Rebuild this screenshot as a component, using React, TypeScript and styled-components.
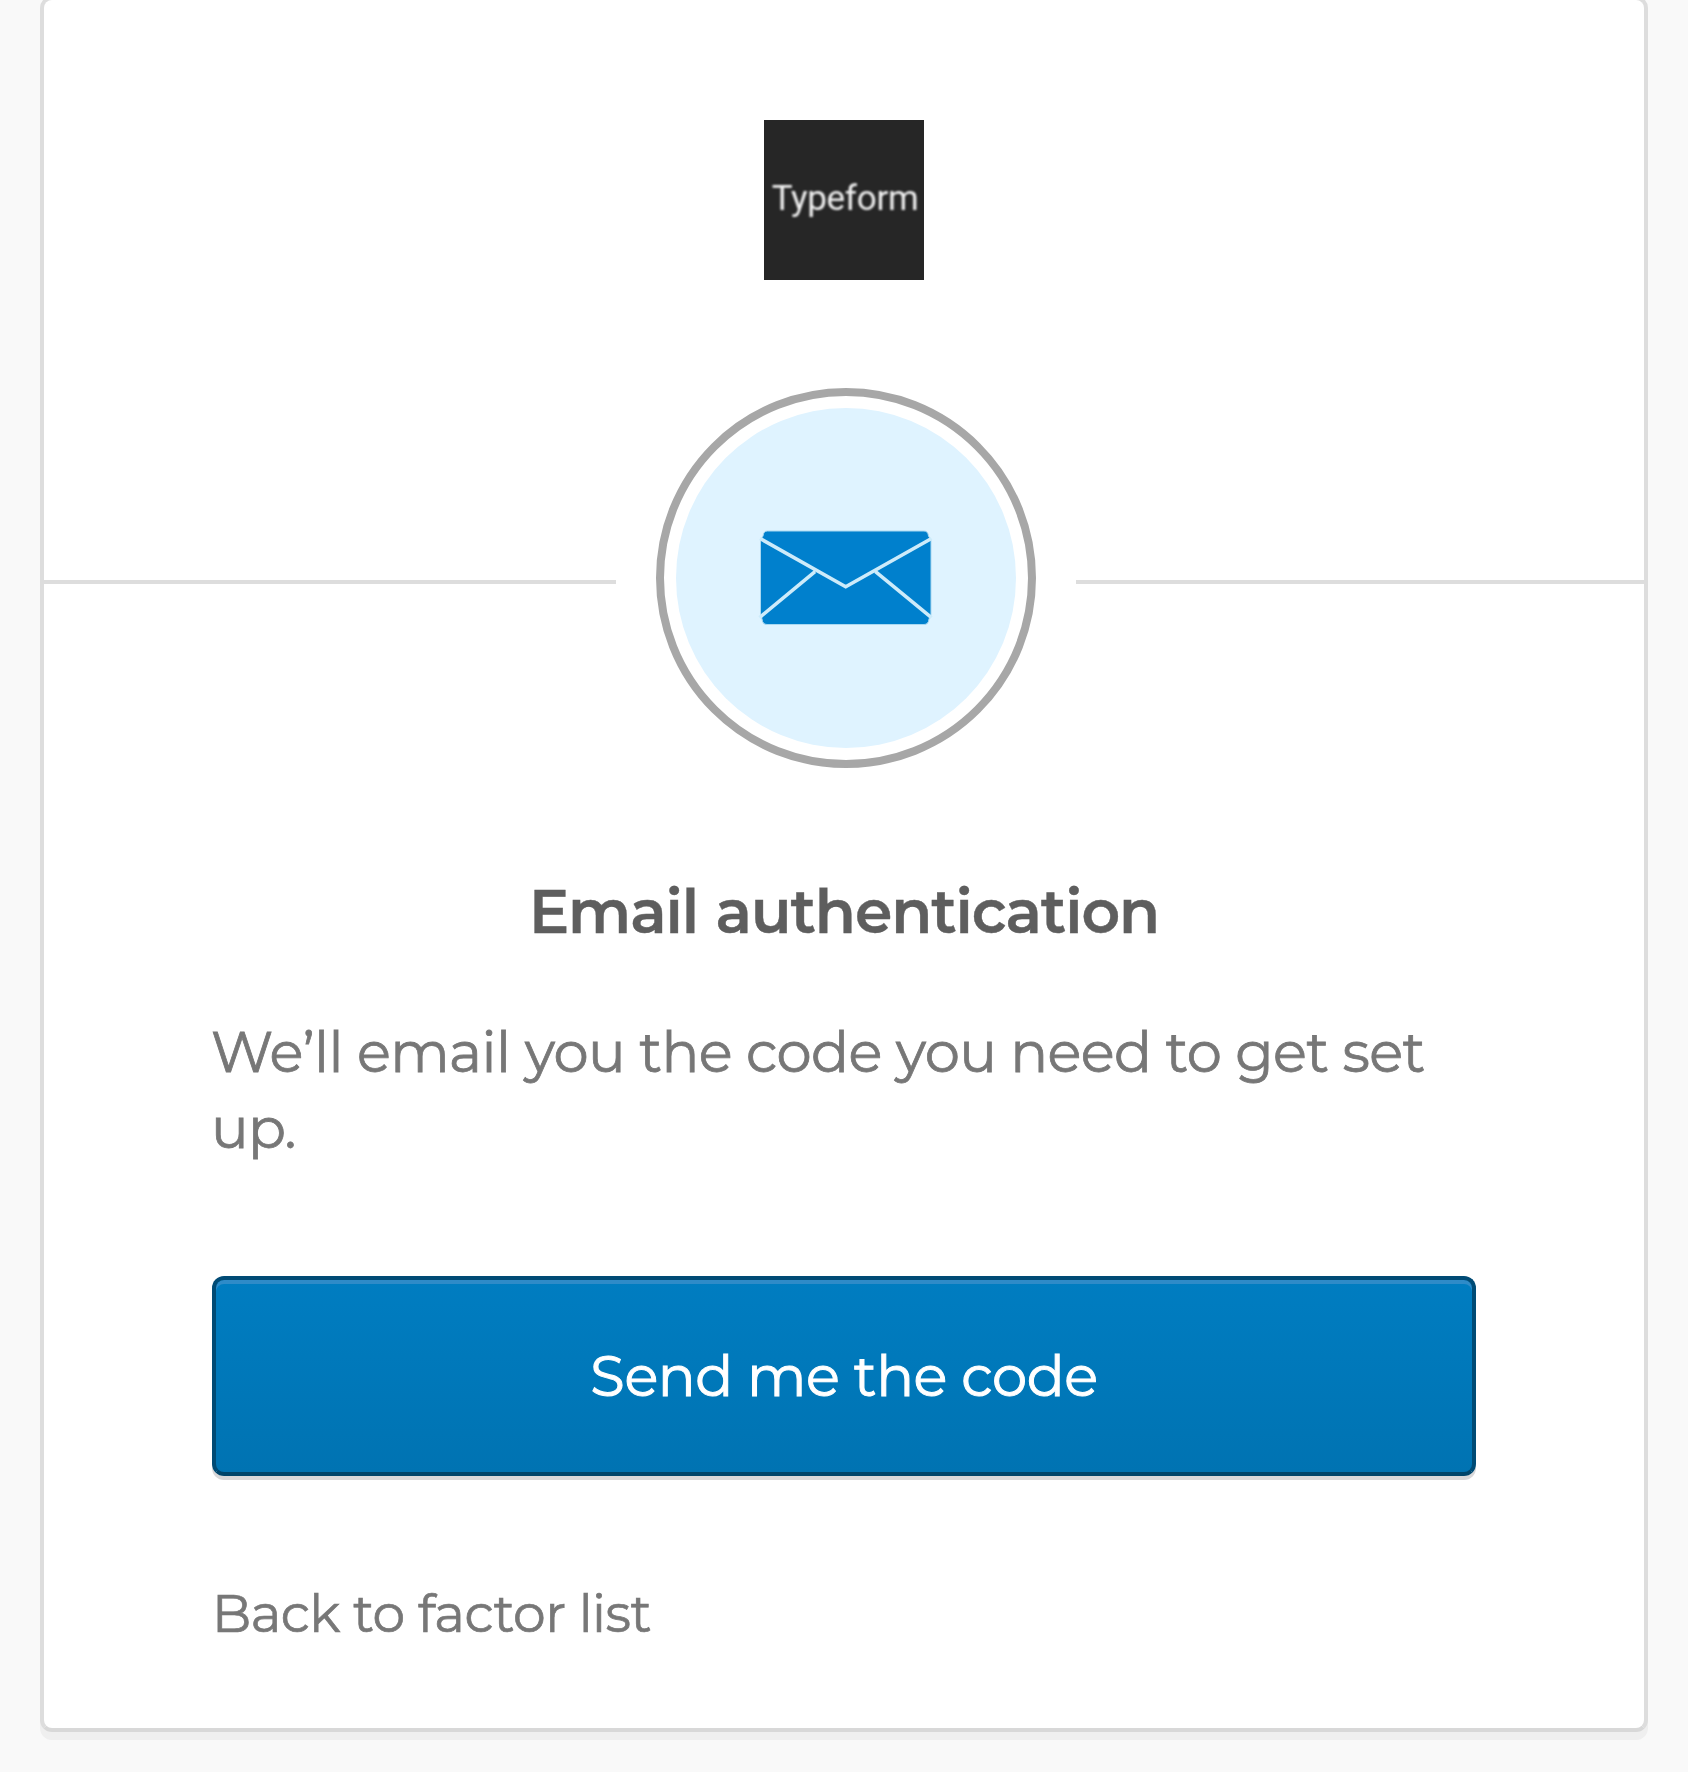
import React from "react";
import styled, { createGlobalStyle } from "styled-components";

const GlobalStyle = createGlobalStyle`
  *, *::before, *::after { box-sizing: border-box; }
  html, body { margin: 0; padding: 0; }
  body {
    background: #f9f9f9;
    font-family: Montserrat, Inter, "Open Sans", sans-serif;
    overflow: hidden;
  }
`;

const Page = styled.div`
  height: 1772px;
  padding: 0 40px;
  display: flex;
  flex-direction: column;
  overflow: hidden;
`;

const Card = styled.main`
  flex: none;
  height: 1736px;
  margin-top: -4px;
  background: #fff;
  border: 4px solid #ddd;
  border-bottom-color: #d8d8d8;
  border-radius: 12px;
  box-shadow: 0 8px 0 #efefef;
  display: flex;
  flex-direction: column;
`;

const Header = styled.header`
  display: flex;
  justify-content: center;
  padding-top: 120px;
  height: 388px;
`;

const Logo = styled.div`
  width: 160px;
  height: 160px;
  background: #262626;
  color: #f2f2f2;
  display: flex;
  align-items: center;
  justify-content: center;
  font-family: Roboto, "Liberation Sans", sans-serif;
  font-size: 35px;
  font-weight: 400;
  line-height: 40px;
  letter-spacing: -0.3px;
  padding: 0 0 3px 2px;
`;

const LogoText = styled.span`
  filter: blur(0.8px);
`;

const BeaconRow = styled.div`
  display: flex;
  align-items: center;
  height: 380px;
`;

const Rule = styled.span<{ $width: number }>`
  flex: none;
  width: ${(p) => p.$width}px;
  height: 4px;
  margin-top: 8px;
  background: #ddd;
`;

const Beacon = styled.div`
  flex: none;
  width: 380px;
  height: 380px;
  margin: 0 40px;
  padding: 12px;
  border: 8px solid #a7a7a7;
  border-radius: 50%;
  background: #fff;
`;

const BeaconFill = styled.div`
  width: 340px;
  height: 340px;
  border-radius: 50%;
  background: #dff3ff;
  display: flex;
  justify-content: center;
  padding-top: 120px;
`;

const Content = styled.section`
  padding: 104px 168px 0;
  display: flex;
  flex-direction: column;
`;

const Title = styled.h2`
  margin: 0;
  height: 80px;
  text-align: center;
  white-space: nowrap;
  font-size: 60px;
  line-height: 80px;
  font-weight: 600;
  letter-spacing: -1.1px;
  word-spacing: 2px;
  color: #5e5e5e;
  -webkit-text-stroke: 0.4px #5e5e5e;
`;

const Message = styled.p`
  margin: 62px 0 0 -1px;
  font-size: 56px;
  line-height: 76px;
  letter-spacing: -0.58px;
  color: #777;
  -webkit-text-stroke: 0.8px #777;
`;

const SendButton = styled.button`
  margin: 110px 0 0;
  height: 200px;
  padding: 0;
  border: 4px solid #004b75;
  border-bottom-color: #00456a;
  border-radius: 12px;
  background: linear-gradient(180deg, #007dc1, #0073b2);
  box-shadow: inset 0 4px 0 #2e8bc8, 0 4px 0 #d9d8d9;
  font-family: inherit;
  font-size: 56px;
  line-height: 80px;
  letter-spacing: -0.4px;
  color: #fff;
  -webkit-text-stroke: 1px #fff;
`;

const BackLink = styled.a`
  align-self: flex-start;
  margin-top: 106px;
  font-size: 52px;
  line-height: 64px;
  letter-spacing: -0.52px;
  color: #777;
  text-decoration: none;
  -webkit-text-stroke: 0.7px #777;
`;

const EnvelopeIcon = () => (
  <svg width="176" height="100" viewBox="0 0 176 100" aria-hidden="true">
    <path
      d="M9.500 3H166Q170 3 170.500 8L173 12V87L171 91Q170.500 96.500 166 96.500H9Q4.500 96.500 4 91L2.500 87V12L5 8Q5.500 3 9.500 3Z"
      fill="#0080cd"
      stroke="#a9d8f1"
      strokeWidth="1"
    />
    <path
      d="M2 10.500L87.700 58.800L173.500 10.500M1.500 89.600L57 43.700M173.500 89.600L117.500 43.700"
      fill="none"
      stroke="#cdebfa"
      strokeWidth="3.600"
    />
  </svg>
);

export default function App() {
  return (
    <>
      <GlobalStyle />
      <Page>
        <Card>
          <Header>
            <Logo>
              <LogoText>Typeform</LogoText>
            </Logo>
          </Header>
          <BeaconRow>
            <Rule $width={572} />
            <Beacon>
              <BeaconFill>
                <EnvelopeIcon />
              </BeaconFill>
            </Beacon>
            <Rule $width={568} />
          </BeaconRow>
          <Content>
            <Title>Email authentication</Title>
            <Message>We’ll email you the code you need to get set up.</Message>
            <SendButton type="button">Send me the code</SendButton>
            <BackLink>Back to factor list</BackLink>
          </Content>
        </Card>
      </Page>
    </>
  );
}
